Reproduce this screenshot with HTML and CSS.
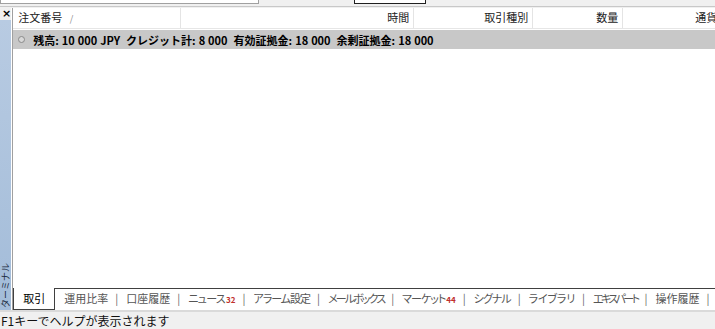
FILE: index.html
```html
<!DOCTYPE html>
<html lang="ja">
<head>
<meta charset="utf-8">
<link rel="stylesheet" href="styles.css">
</head>
<body>
<div class="topstrip">
  <div class="tbox tbox-a"></div>
  <div class="tbox tbox-b"></div>
</div>
<div class="main">
  <div class="side">
    <div class="close">×</div>
    <div class="sidebar"><span class="sidelabel">ターミナル</span></div>
  </div>
  <div class="panel">
    <div class="thead">
      <div class="th c1">注文番号 <span class="sort">/</span></div>
      <div class="th c2">時間</div>
      <div class="th c3">取引種別</div>
      <div class="th c4">数量</div>
      <div class="th c5">通貨</div>
    </div>
    <div class="balance">
      <span class="dot"></span>
      <span class="btext">残高: 10 000 JPY&nbsp;&nbsp;クレジット計: 8 000&nbsp;&nbsp;有効証拠金: 18 000&nbsp;&nbsp;余剰証拠金: 18 000</span>
    </div>
    <div class="body"></div>
    <div class="tabs">
      <div class="tab active">取引</div>
      <div class="tab">運用比率</div><span class="sep">|</span>
      <div class="tab">口座履歴</div><span class="sep">|</span>
      <div class="tab"><span class="kn-s">ニュース</span><b class="badge">32</b></div><span class="sep">|</span>
      <div class="tab kn-m">アラーム設定</div><span class="sep">|</span>
      <div class="tab kn-l">メールボックス</div><span class="sep">|</span>
      <div class="tab"><span class="kn-m">マーケット</span><b class="badge">44</b></div><span class="sep">|</span>
      <div class="tab kn-m">シグナル</div><span class="sep">|</span>
      <div class="tab kn-xs">ライブラリ</div><span class="sep">|</span>
      <div class="tab kn-xl">エキスパート</div><span class="sep">|</span>
      <div class="tab">操作履歴</div><span class="sep">|</span>
    </div>
  </div>
</div>
<div class="status">F1キーでヘルプが表示されます</div>
</body>
</html>
```
FILE: styles.css
```css
html, body {
  margin: 0;
  padding: 0;
}
body {
  width: 715px;
  height: 329px;
  overflow: hidden;
  background: #f0f0f0;
  font-family: "Noto Sans CJK JP", "Noto Sans", sans-serif;
  font-size: 11px;
  color: #000;
}
.topstrip {
  height: 6px;
  border-bottom: 1px solid #c8c8c8;
  background: #f0f0f0;
  display: flex;
}
.tbox {
  height: 3px;
  background: #fff;
}
.tbox-a {
  width: 257px;
  border: 1px solid #a0a0a0;
  border-top: none;
}
.tbox-b {
  margin-left: 95px;
  width: 70px;
  border: 1px solid #202020;
  border-top: none;
}
.main {
  display: flex;
  height: 302px;
  margin-top: 1px;
}
.side {
  width: 12px;
  display: flex;
  flex-direction: column;
  border-right: 1px solid #fff;
}
.close {
  height: 12px;
  font-size: 11px;
  font-weight: bold;
  line-height: 12px;
  padding-left: 2px;
  font-family: "DejaVu Sans", sans-serif;
}
.sidebar {
  flex: 1;
  background: linear-gradient(to bottom, #b8cbe2, #a3bcd9);
  display: flex;
  align-items: flex-end;
  justify-content: center;
  padding-bottom: 2px;
}
.sidelabel {
  writing-mode: vertical-rl;
  text-orientation: sideways;
  transform: rotate(180deg);
  font-size: 9px;
  line-height: 11px;
  color: #1a2a40;
}
.panel {
  flex: 1;
  display: flex;
  flex-direction: column;
  background: #fff;
  border-left: 1px solid #a0a0a0;
}
.thead {
  display: flex;
  height: 20px;
  border-bottom: 1px solid #e6e6e6;
  background: #fff;
  color: #222;
}
.th {
  line-height: 19px;
  padding: 0 4px;
  border-right: 1px solid #e4e4e4;
  text-align: right;
  white-space: nowrap;
  overflow: hidden;
}
.th.c1 { width: 158px; text-align: left; padding-left: 5px; }
.th.c2 { width: 224px; }
.th.c3 { width: 110px; }
.th.c4 { width: 81px; }
.th.c5 { width: 90px; border-right: none; }
.sort {
  color: #888;
  font-size: 9px;
  margin-left: 5px;
}
.balance {
  height: 19px;
  margin-top: 1px;
  background: #c8c8c8;
  display: flex;
  align-items: center;
  padding-left: 5px;
}
.dot {
  width: 5px;
  height: 5px;
  border: 1px solid #8a8a8a;
  border-radius: 50%;
  background: #d8d8d8;
  margin-right: 8px;
}
.btext {
  font-weight: bold;
  white-space: nowrap;
  word-spacing: 0.5px;
}
.body {
  flex: 1;
}
.tabs {
  height: 21px;
  display: flex;
  align-items: stretch;
  border-top: 1px solid #404040;
  color: #555;
  white-space: nowrap;
  font-feature-settings: "palt";
}
.tab {
  line-height: 19px;
  padding: 0 7px 0 8px;
}
.kn-xs { letter-spacing: -0.2px; }
.kn-s { letter-spacing: -0.7px; }
.kn-m { letter-spacing: -1px; }
.kn-l { letter-spacing: -1.9px; }
.kn-xl { letter-spacing: -2.6px; }
.tab.active {
  color: #000;
  background: #fff;
  margin-top: -1px;
  padding: 1px 9px 0 9px;
  margin-right: 1px;
  width: 22px;
  border-left: 1px solid #404040;
  border-right: 1px solid #404040;
  border-bottom: 1px solid #404040;
}
.sep {
  line-height: 19px;
  color: #666;
}
.badge {
  color: #c0302c;
  font-size: 8px;
  margin-left: 1px;
  letter-spacing: 0;
}
.status {
  height: 18px;
  line-height: 17px;
  border-top: 2px solid #dadada;
  padding-left: 1px;
  color: #111;
  font-size: 12px;
}
```
